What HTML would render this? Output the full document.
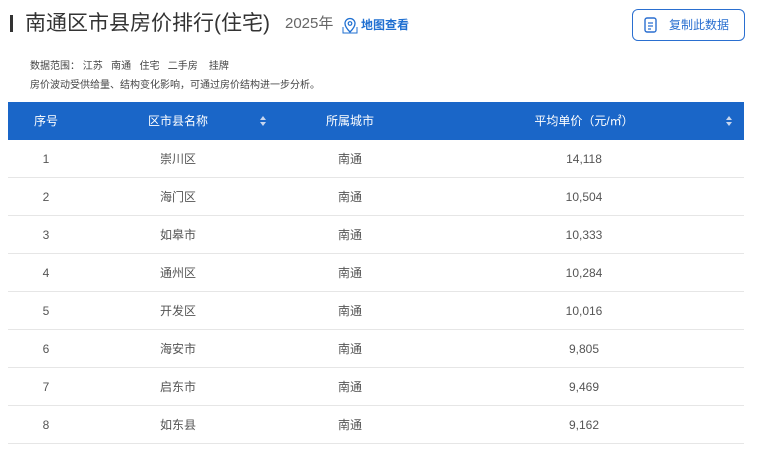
<!DOCTYPE html>
<html><head><meta charset="utf-8"><style>
*{margin:0;padding:0;box-sizing:border-box}
body{width:761px;height:459px;background:#fff;font-family:"Liberation Sans","Noto Sans CJK SC",sans-serif;position:relative;overflow:hidden;color:#333}
.a{position:absolute;white-space:nowrap;line-height:1.2}
.bar{left:10px;top:15px;width:3px;height:17px;background:#333}
.t{left:25px;top:11px;font-size:21px;color:#333}
.y{left:285px;top:15px;font-size:15px;color:#666}
.map{top:18px;font-size:12px;color:#1f6fd1;font-weight:bold}
.btn{left:632px;top:9px;width:113px;height:32px;border:1px solid #2a6fd0;border-radius:6px;font-size:12px;color:#2a6fd0}
.s{font-size:10px;color:#444}
.hd{left:8px;top:102px;width:736px;height:38px;background:#1a66c8}
.c{position:absolute;transform:translateX(-50%);font-size:12px;white-space:nowrap;line-height:16px;height:16px;color:#555}
.h{color:#fff;top:113px}
.row{position:absolute;left:8px;width:736px;height:38px;border-bottom:1px solid #e6e6e6}
.sort{position:absolute;width:6px;height:10px}
</style></head><body>
<div class="a bar"></div>
<div class="a t">南通区市县房价排行(住宅)</div>
<div class="a y">2025年</div>
<svg class="a" style="left:342px;top:17px" width="16" height="17" viewBox="0 0 16 17"><path d="M8 15C4 11 3 8.5 3 6.5a5 5 0 0 1 10 0C13 8.5 12 11 8 15z" fill="none" stroke="#1f6fd1" stroke-width="1.3"/><circle cx="8" cy="6.5" r="1.8" fill="none" stroke="#1f6fd1" stroke-width="1.2"/><path d="M1 10v6h14v-6" fill="none" stroke="#1f6fd1" stroke-width="1"/></svg>
<div class="a map" style="left:361px">地图查看</div>
<div class="a btn"><svg style="position:absolute;left:11px;top:7px" width="14" height="17" viewBox="0 0 14 17"><rect x="1" y="1" width="11" height="14" rx="2" fill="none" stroke="#2a6fd0" stroke-width="1.4"/><path d="M4 6h5M4 9h5M4 12h3" stroke="#2a6fd0" stroke-width="1.2"/></svg><span style="position:absolute;left:36px;top:8px">复制此数据</span></div>
<div class="a s" style="left:30px;top:61px">数据范围：&nbsp;江苏&nbsp;&nbsp;&nbsp;南通&nbsp;&nbsp;&nbsp;住宅&nbsp;&nbsp;&nbsp;二手房&nbsp;&nbsp;&nbsp;&nbsp;挂牌</div>
<div class="a s" style="left:30px;top:80px">房价波动受供给量、结构变化影响，可通过房价结构进一步分析。</div>
<div class="a hd"></div>
<div class="c h" style="left:46px">序号</div>
<div class="c h" style="left:178px">区市县名称</div>
<div class="c h" style="left:350px">所属城市</div>
<div class="c h" style="left:584px">平均单价（元/㎡）</div>
<svg class="sort" style="left:260px;top:116px" viewBox="0 0 6 10"><path d="M3 0L6 4H0z M3 10L0 6H6z" fill="#c8d6ee"/></svg>
<svg class="sort" style="left:726px;top:116px" viewBox="0 0 6 10"><path d="M3 0L6 4H0z M3 10L0 6H6z" fill="#c8d6ee"/></svg>
<div class="row" style="top:140px"></div><div class="row" style="top:178px"></div><div class="row" style="top:216px"></div><div class="row" style="top:254px"></div><div class="row" style="top:292px"></div><div class="row" style="top:330px"></div><div class="row" style="top:368px"></div><div class="row" style="top:406px"></div>
<div class="c" style="left:46px;top:151px">1</div><div class="c" style="left:178px;top:151px">崇川区</div><div class="c" style="left:350px;top:151px">南通</div><div class="c" style="left:584px;top:151px">14,118</div>
<div class="c" style="left:46px;top:189px">2</div><div class="c" style="left:178px;top:189px">海门区</div><div class="c" style="left:350px;top:189px">南通</div><div class="c" style="left:584px;top:189px">10,504</div>
<div class="c" style="left:46px;top:227px">3</div><div class="c" style="left:178px;top:227px">如皋市</div><div class="c" style="left:350px;top:227px">南通</div><div class="c" style="left:584px;top:227px">10,333</div>
<div class="c" style="left:46px;top:265px">4</div><div class="c" style="left:178px;top:265px">通州区</div><div class="c" style="left:350px;top:265px">南通</div><div class="c" style="left:584px;top:265px">10,284</div>
<div class="c" style="left:46px;top:303px">5</div><div class="c" style="left:178px;top:303px">开发区</div><div class="c" style="left:350px;top:303px">南通</div><div class="c" style="left:584px;top:303px">10,016</div>
<div class="c" style="left:46px;top:341px">6</div><div class="c" style="left:178px;top:341px">海安市</div><div class="c" style="left:350px;top:341px">南通</div><div class="c" style="left:584px;top:341px">9,805</div>
<div class="c" style="left:46px;top:379px">7</div><div class="c" style="left:178px;top:379px">启东市</div><div class="c" style="left:350px;top:379px">南通</div><div class="c" style="left:584px;top:379px">9,469</div>
<div class="c" style="left:46px;top:417px">8</div><div class="c" style="left:178px;top:417px">如东县</div><div class="c" style="left:350px;top:417px">南通</div><div class="c" style="left:584px;top:417px">9,162</div>
</body></html>
